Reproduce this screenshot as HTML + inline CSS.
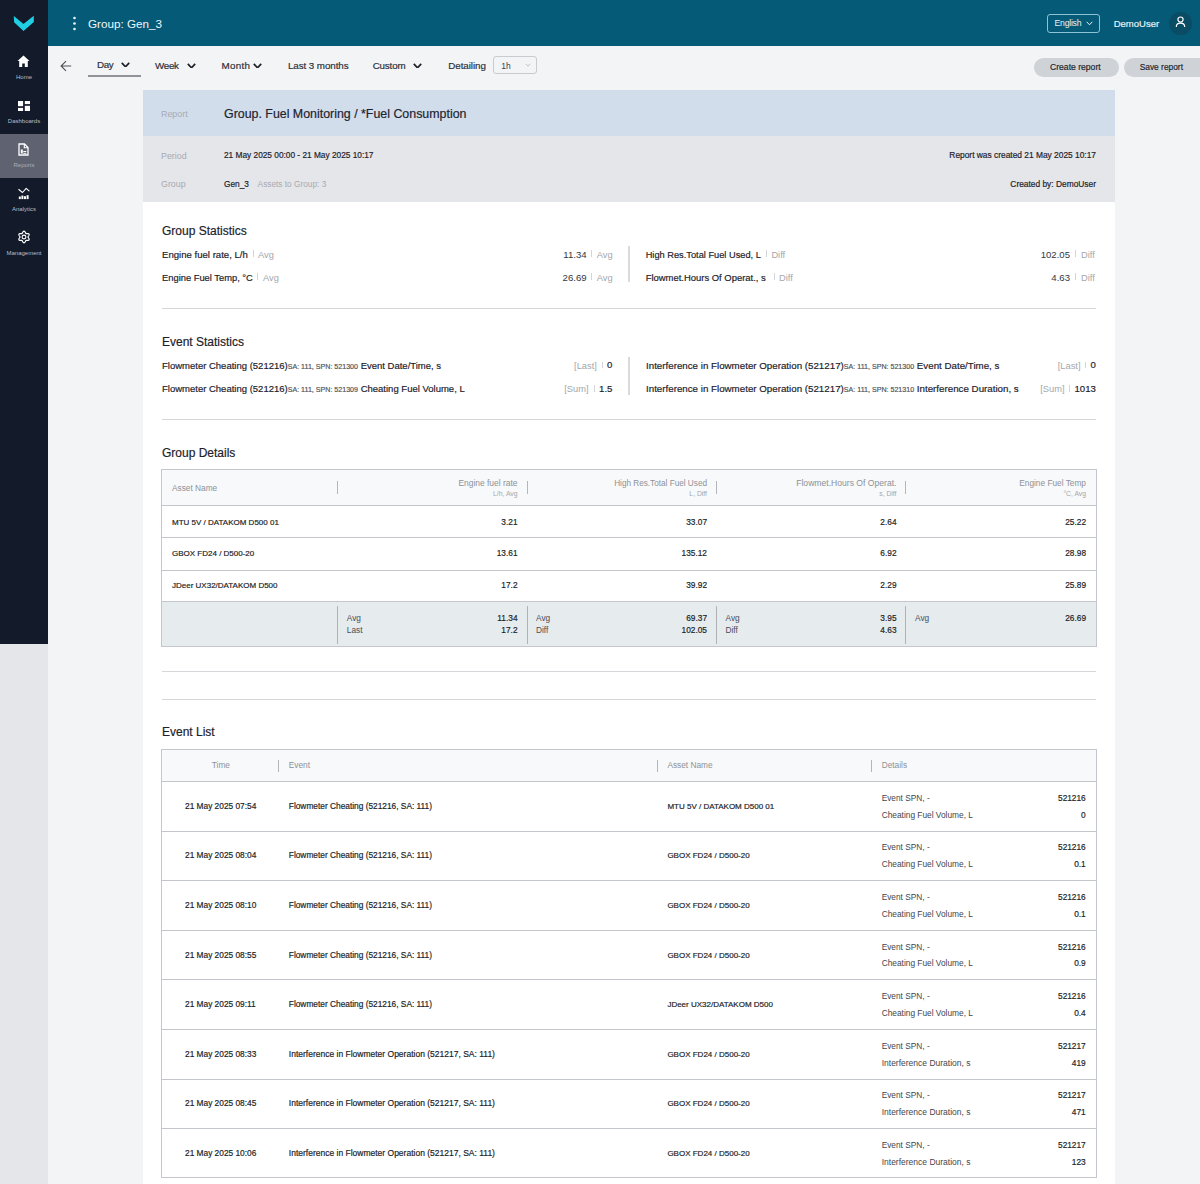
<!DOCTYPE html>
<html><head><meta charset="utf-8"><style>
html,body{margin:0;padding:0;width:1200px;height:1184px;overflow:hidden;background:#f3f4f6;}
body{position:relative;font-family:"Liberation Sans", sans-serif;}
.t{position:absolute;white-space:nowrap;line-height:1;}
.s{-webkit-text-stroke:0.18px currentColor;}
.r{position:absolute;}
</style></head><body>
<div class="r" style="left:0px;top:0px;width:1200px;height:1184px;background:#f3f4f6;"></div>
<div class="r" style="left:0px;top:0px;width:48px;height:644px;background:#131a2a;"></div>
<div class="r" style="left:0px;top:644px;width:48px;height:540px;background:#e4e6ea;"></div>
<div class="r" style="left:0px;top:134px;width:48px;height:44px;background:#5f6371;"></div>
<div class="r" style="left:48px;top:0px;width:1152px;height:46px;background:#055a77;"></div>
<svg class="r" style="left:13px;top:15px" width="22" height="17" viewBox="0 0 22 17"><path d="M0.8 1 L10.5 9 L20.8 0.8 L20.8 7 L10.5 16 L1.1 7.3 Z" fill="#20cfe4"/></svg>
<svg class="r" style="left:17px;top:55px" width="13" height="13" viewBox="0 0 13 13"><path d="M6.5 0.5 L12.5 6 L10.8 6 L10.8 12 L7.8 12 L7.8 8.5 L5.2 8.5 L5.2 12 L2.2 12 L2.2 6 L0.5 6 Z" fill="#fff"/></svg>
<svg class="r" style="left:18px;top:101px" width="12" height="10" viewBox="0 0 12 10"><rect x="0" y="0" width="5.1" height="5.2" fill="#fff"/><rect x="6.8" y="0" width="5.2" height="3.1" fill="#fff"/><rect x="0" y="6.9" width="5.1" height="3.1" fill="#fff"/><rect x="6.8" y="4.8" width="5.2" height="5.2" fill="#fff"/></svg>
<svg class="r" style="left:18px;top:143px" width="11" height="13" viewBox="0 0 11 13"><path d="M1 1 H6.5 L10 4.5 V12 H1 Z" fill="none" stroke="#fff" stroke-width="1.3"/><path d="M6.3 1 V4.7 H10" fill="none" stroke="#fff" stroke-width="1.1"/><rect x="2.8" y="6.5" width="2" height="4" fill="#fff"/><rect x="5.3" y="8" width="3" height="1" fill="#fff"/><rect x="5.3" y="9.8" width="3" height="1" fill="#fff"/></svg>
<svg class="r" style="left:17px;top:186px" width="14" height="14" viewBox="0 0 14 14"><path d="M1.8 3.5 L5.5 6.5 L9.2 2.4 L12 4.8" fill="none" stroke="#fff" stroke-width="1.1" stroke-linejoin="round" stroke-linecap="round"/><rect x="1.8" y="10.5" width="2" height="2.6" fill="#fff"/><rect x="4.4" y="9.6" width="2" height="3.5" fill="#fff"/><rect x="7" y="10.2" width="2" height="2.9" fill="#fff"/><rect x="9.6" y="9.2" width="2" height="3.9" fill="#fff"/></svg>
<svg class="r" style="left:17px;top:230px" width="14" height="14" viewBox="0 0 14 14"><path d="M7.00 1.20 L7.49 1.34 L7.93 1.73 L8.27 2.27 L8.52 2.82 L8.74 3.27 L9.00 3.54 L9.36 3.62 L9.86 3.59 L10.46 3.54 L11.10 3.56 L11.65 3.74 L12.02 4.10 L12.15 4.60 L12.03 5.17 L11.73 5.73 L11.38 6.23 L11.10 6.64 L11.00 7.00 L11.10 7.36 L11.38 7.77 L11.73 8.27 L12.03 8.83 L12.15 9.40 L12.02 9.90 L11.65 10.26 L11.10 10.44 L10.46 10.46 L9.86 10.41 L9.36 10.38 L9.00 10.46 L8.74 10.73 L8.52 11.18 L8.27 11.73 L7.93 12.27 L7.49 12.66 L7.00 12.80 L6.51 12.66 L6.07 12.27 L5.73 11.73 L5.48 11.18 L5.26 10.73 L5.00 10.46 L4.64 10.38 L4.14 10.41 L3.54 10.46 L2.90 10.44 L2.35 10.26 L1.98 9.90 L1.85 9.40 L1.97 8.83 L2.27 8.27 L2.62 7.77 L2.90 7.36 L3.00 7.00 L2.90 6.64 L2.62 6.23 L2.27 5.73 L1.97 5.17 L1.85 4.60 L1.98 4.10 L2.35 3.74 L2.90 3.56 L3.54 3.54 L4.14 3.59 L4.64 3.62 L5.00 3.54 L5.26 3.27 L5.48 2.82 L5.73 2.27 L6.07 1.73 L6.51 1.34 Z" fill="none" stroke="#fff" stroke-width="1.2" stroke-linejoin="round"/><circle cx="7" cy="7" r="1.9" fill="none" stroke="#fff" stroke-width="1.1"/></svg>
<div class="t" style="left:-276.00px;width:600px;text-align:center;top:74.01px;font-size:6.0px;color:#b9bcc4;">Home</div>
<div class="t" style="left:-276.00px;width:600px;text-align:center;top:117.51px;font-size:6.0px;color:#b9bcc4;">Dashboards</div>
<div class="t" style="left:-276.00px;width:600px;text-align:center;top:161.51px;font-size:6.0px;color:#a9acb4;">Reports</div>
<div class="t" style="left:-276.00px;width:600px;text-align:center;top:205.51px;font-size:6.0px;color:#b9bcc4;">Analytics</div>
<div class="t" style="left:-276.00px;width:600px;text-align:center;top:249.51px;font-size:6.0px;color:#b9bcc4;">Management</div>
<svg class="r" style="left:71px;top:15px" width="7" height="17" viewBox="0 0 7 17"><circle cx="3.5" cy="3" r="1.35" fill="#e6f3f7"/><circle cx="3.5" cy="8.5" r="1.35" fill="#e6f3f7"/><circle cx="3.5" cy="14" r="1.35" fill="#e6f3f7"/></svg>
<div class="t" style="left:88.00px;top:17.50px;font-size:11.7px;color:#eef7fa;">Group: Gen_3</div>
<div class="r" style="left:1047px;top:14px;width:51px;height:17px;border:1px solid #8ec3d3;border-radius:3px;box-sizing:content-box;"></div>
<div class="t" style="left:1054.50px;top:19.30px;font-size:8.7px;color:#e6f3f7;letter-spacing:-0.25px;">English</div>
<svg class="r" style="left:1086px;top:21.3px" width="7" height="5" viewBox="0 0 7 5"><path d="M0.7 0.8 L3.5 3.8 L6.3 0.8" fill="none" stroke="#e6f3f7" stroke-width="1"/></svg>
<div class="t s" style="left:1113.70px;top:18.70px;font-size:9.5px;color:#e6f3f7;">DemoUser</div>
<div class="r" style="left:1168.5px;top:11.5px;width:23.5px;height:23.5px;background:#0b4c65;border-radius:50%;"></div>
<svg class="r" style="left:1175px;top:16px" width="11" height="12" viewBox="0 0 11 12"><circle cx="5.5" cy="3.6" r="2.6" fill="none" stroke="#fff" stroke-width="1.2"/><path d="M1.3 11 C1.3 8.2 3.2 7.2 5.5 7.2 C7.8 7.2 9.7 8.2 9.7 11" fill="none" stroke="#fff" stroke-width="1.2"/></svg>
<svg class="r" style="left:59.5px;top:59.5px" width="12" height="12" viewBox="0 0 12 12"><path d="M11.2 6 H1.2 M6 1.1 L1.1 6 L6 10.9" fill="none" stroke="#4f5258" stroke-width="1.15"/></svg>
<div class="t s" style="left:97.00px;top:59.61px;font-size:9.8px;color:#2b2f36;letter-spacing:-0.414px;">Day</div>
<div class="t s" style="left:155.00px;top:60.80px;font-size:9.8px;color:#2b2f36;letter-spacing:-0.291px;">Week</div>
<div class="t s" style="left:221.50px;top:60.80px;font-size:9.8px;color:#2b2f36;letter-spacing:0.316px;">Month</div>
<div class="t s" style="left:287.90px;top:60.80px;font-size:9.8px;color:#2b2f36;letter-spacing:-0.071px;">Last 3 months</div>
<div class="t s" style="left:372.70px;top:60.80px;font-size:9.8px;color:#2b2f36;letter-spacing:-0.173px;">Custom</div>
<div class="t s" style="left:448.30px;top:60.80px;font-size:9.8px;color:#2b2f36;letter-spacing:-0.067px;">Detailing</div>
<svg class="r" style="left:120.5px;top:61.6px" width="9" height="5.6" viewBox="0 0 9 5.6"><path d="M0.8 0.8 L4.5 4.8 L8.2 0.8" fill="none" stroke="#1e2127" stroke-width="1.7"/></svg>
<svg class="r" style="left:186.7px;top:62.8px" width="9" height="5.6" viewBox="0 0 9 5.6"><path d="M0.8 0.8 L4.5 4.8 L8.2 0.8" fill="none" stroke="#1e2127" stroke-width="1.7"/></svg>
<svg class="r" style="left:252.7px;top:62.8px" width="9" height="5.6" viewBox="0 0 9 5.6"><path d="M0.8 0.8 L4.5 4.8 L8.2 0.8" fill="none" stroke="#1e2127" stroke-width="1.7"/></svg>
<svg class="r" style="left:413px;top:62.8px" width="9" height="5.6" viewBox="0 0 9 5.6"><path d="M0.8 0.8 L4.5 4.8 L8.2 0.8" fill="none" stroke="#1e2127" stroke-width="1.7"/></svg>
<div class="r" style="left:88px;top:75px;width:53px;height:2px;background:#909397;"></div>
<div class="r" style="left:493px;top:56px;width:42px;height:16px;border:1px solid #c8cbcf;border-radius:3px;box-sizing:content-box;"></div>
<div class="t" style="left:501.20px;top:61.51px;font-size:8.5px;color:#3a3e45;">1h</div>
<svg class="r" style="left:525px;top:63px" width="6" height="4" viewBox="0 0 6 4"><path d="M0.8 0.8 L3.0 3.2 L5.2 0.8" fill="none" stroke="#b4b7bc" stroke-width="0.8"/></svg>
<div class="r" style="left:1033.5px;top:58px;width:85px;height:18.5px;background:#cfd3d7;border-radius:10px;"></div>
<div class="t s" style="left:1050.00px;top:63.21px;font-size:8.6px;color:#22262d;">Create report</div>
<div class="r" style="left:1123.5px;top:58px;width:90px;height:18.5px;background:#cfd3d7;border-radius:10px;"></div>
<div class="t s" style="left:1139.70px;top:63.21px;font-size:8.4px;color:#22262d;">Save report</div>
<div class="r" style="left:142.5px;top:90px;width:972px;height:1094px;background:#ffffff;"></div>
<div class="r" style="left:142.5px;top:90px;width:972px;height:46px;background:#d2ddec;"></div>
<div class="r" style="left:142.5px;top:136px;width:972px;height:66px;background:#e4e6ea;"></div>
<div class="t" style="left:161.00px;top:109.50px;font-size:8.9px;color:#a7aab0;">Report</div>
<div class="t s" style="left:224.00px;top:108.41px;font-size:12.4px;color:#1d2330;">Group. Fuel Monitoring / *Fuel Consumption</div>
<div class="t" style="left:161.00px;top:151.50px;font-size:8.9px;color:#a7aab0;">Period</div>
<div class="t s" style="left:224.00px;top:151.31px;font-size:8.3px;color:#1d212a;">21 May 2025 00:00 - 21 May 2025 10:17</div>
<div class="t s" style="right:104.00px;top:151.30px;font-size:8.4px;color:#1d212a;">Report was created 21 May 2025 10:17</div>
<div class="t" style="left:161.00px;top:180.00px;font-size:8.9px;color:#a7aab0;">Group</div>
<div class="t s" style="left:224.00px;top:180.01px;font-size:8.3px;color:#1d212a;">Gen_3</div>
<div class="t" style="left:257.60px;top:180.01px;font-size:8.3px;color:#a7aab0;">Assets to Group: 3</div>
<div class="t s" style="right:104.00px;top:180.01px;font-size:8.4px;color:#1d212a;">Created by: DemoUser</div>
<div class="t s" style="left:162.00px;top:224.71px;font-size:12.0px;color:#1d212a;">Group Statistics</div>
<div class="t s" style="left:162.00px;top:250.01px;font-size:9.6px;color:#1d212a;">Engine fuel rate, L/h</div>
<div class="r" style="left:252.8px;top:250px;width:1px;height:6.5px;background:#d3d5d8;"></div>
<div class="t" style="left:258.00px;top:251.00px;font-size:9.3px;color:#a4a7ac;">Avg</div>
<div class="t s" style="left:162.00px;top:274.31px;font-size:9.35px;color:#1d212a;">Engine Fuel Temp, °C</div>
<div class="r" style="left:256.8px;top:273.3px;width:1px;height:6.5px;background:#d3d5d8;"></div>
<div class="t" style="left:263.00px;top:274.31px;font-size:9.3px;color:#a4a7ac;">Avg</div>
<div class="t" style="right:613.40px;top:250.01px;font-size:9.6px;color:#33373e;">11.34</div>
<div class="r" style="left:591.3px;top:250px;width:1px;height:6.5px;background:#d3d5d8;"></div>
<div class="t" style="left:596.80px;top:251.00px;font-size:9.3px;color:#a4a7ac;">Avg</div>
<div class="t" style="right:613.40px;top:273.32px;font-size:9.6px;color:#33373e;">26.69</div>
<div class="r" style="left:591.3px;top:273.3px;width:1px;height:6.5px;background:#d3d5d8;"></div>
<div class="t" style="left:596.80px;top:274.31px;font-size:9.3px;color:#a4a7ac;">Avg</div>
<div class="r" style="left:628px;top:246px;width:1.5px;height:36px;background:#d8dadd;"></div>
<div class="t s" style="left:645.70px;top:251.01px;font-size:9.25px;color:#1d212a;">High Res.Total Fuel Used, L</div>
<div class="r" style="left:765.8px;top:250px;width:1px;height:6.5px;background:#d3d5d8;"></div>
<div class="t" style="left:771.40px;top:251.00px;font-size:9.3px;color:#a4a7ac;">Diff</div>
<div class="t s" style="left:645.70px;top:273.30px;font-size:9.45px;color:#1d212a;">Flowmet.Hours Of Operat., s</div>
<div class="r" style="left:773.8px;top:273.3px;width:1px;height:6.5px;background:#d3d5d8;"></div>
<div class="t" style="left:779.00px;top:274.31px;font-size:9.3px;color:#a4a7ac;">Diff</div>
<div class="t" style="right:130.00px;top:250.01px;font-size:9.6px;color:#33373e;">102.05</div>
<div class="r" style="left:1074.8px;top:250px;width:1px;height:6.5px;background:#d3d5d8;"></div>
<div class="t" style="left:1081.00px;top:251.00px;font-size:9.3px;color:#a4a7ac;">Diff</div>
<div class="t" style="right:130.00px;top:273.32px;font-size:9.6px;color:#33373e;">4.63</div>
<div class="r" style="left:1074.8px;top:273.3px;width:1px;height:6.5px;background:#d3d5d8;"></div>
<div class="t" style="left:1081.00px;top:274.31px;font-size:9.3px;color:#a4a7ac;">Diff</div>
<div class="r" style="left:162px;top:308px;width:934px;height:1px;background:#d5d7db;"></div>
<div class="t s" style="left:162.00px;top:335.51px;font-size:12.0px;color:#1d212a;">Event Statistics</div>
<div class="t s" style="left:162px;top:360.70px;font-size:9.5px;color:#1d212a;">Flowmeter Cheating (521216)<span style="font-size:7.100px;color:#50545b;">SA: 111, SPN: 521300</span> Event Date/Time, s</div>
<div class="t s" style="left:162px;top:383.90px;font-size:9.5px;color:#1d212a;">Flowmeter Cheating (521216)<span style="font-size:7.100px;color:#50545b;">SA: 111, SPN: 521309</span> Cheating Fuel Volume, L</div>
<div class="t" style="right:603.20px;top:362.00px;font-size:9.3px;color:#a4a7ac;">[Last]</div>
<div class="r" style="left:601.5px;top:361.8px;width:1px;height:6.5px;background:#d3d5d8;"></div>
<div class="t s" style="right:587.60px;top:360.32px;font-size:9.6px;color:#1d212a;">0</div>
<div class="t" style="right:611.50px;top:385.41px;font-size:9.3px;color:#a4a7ac;">[Sum]</div>
<div class="r" style="left:593.7px;top:385.2px;width:1px;height:6.5px;background:#d3d5d8;"></div>
<div class="t s" style="right:587.60px;top:383.71px;font-size:9.6px;color:#1d212a;">1.5</div>
<div class="r" style="left:628px;top:357px;width:1.5px;height:37.5px;background:#d8dadd;"></div>
<div class="t s" style="left:646px;top:360.71px;font-size:9.75px;color:#1d212a;">Interference in Flowmeter Operation (521217)<span style="font-size:7.100px;color:#50545b;">SA: 111, SPN: 521300</span> Event Date/Time, s</div>
<div class="t s" style="left:646px;top:383.91px;font-size:9.75px;color:#1d212a;">Interference in Flowmeter Operation (521217)<span style="font-size:7.100px;color:#50545b;">SA: 111, SPN: 521310</span> Interference Duration, s</div>
<div class="t" style="right:119.50px;top:362.00px;font-size:9.3px;color:#a4a7ac;">[Last]</div>
<div class="r" style="left:1085.3px;top:361.8px;width:1px;height:6.5px;background:#d3d5d8;"></div>
<div class="t s" style="right:104.20px;top:360.32px;font-size:9.6px;color:#1d212a;">0</div>
<div class="t" style="right:135.50px;top:385.41px;font-size:9.3px;color:#a4a7ac;">[Sum]</div>
<div class="r" style="left:1068.8px;top:385.2px;width:1px;height:6.5px;background:#d3d5d8;"></div>
<div class="t s" style="right:104.20px;top:383.71px;font-size:9.6px;color:#1d212a;">1013</div>
<div class="r" style="left:162px;top:419px;width:934px;height:1px;background:#d5d7db;"></div>
<div class="t s" style="left:162.00px;top:446.71px;font-size:12.0px;color:#1d212a;">Group Details</div>
<div class="r" style="left:161px;top:469px;width:934px;height:176px;border:1px solid #c3c7cc;background:#fff;"></div>
<div class="r" style="left:162px;top:470px;width:934px;height:35px;background:#f8f9fa;"></div>
<div class="r" style="left:162px;top:505px;width:934px;height:1px;background:#c3c7cc;"></div>
<div class="r" style="left:162px;top:537px;width:934px;height:1px;background:#c3c7cc;"></div>
<div class="r" style="left:162px;top:570px;width:934px;height:1px;background:#c3c7cc;"></div>
<div class="r" style="left:162px;top:601px;width:934px;height:1px;background:#c3c7cc;"></div>
<div class="r" style="left:162px;top:602px;width:934px;height:44px;background:#e6ebee;"></div>
<div class="t" style="left:172.00px;top:484.01px;font-size:8.3px;color:#8d9197;">Asset Name</div>
<div class="r" style="left:336.5px;top:481px;width:1px;height:12.5px;background:#b3b7bc;"></div>
<div class="r" style="left:526.5px;top:481px;width:1px;height:12.5px;background:#b3b7bc;"></div>
<div class="r" style="left:715.5px;top:481px;width:1px;height:12.5px;background:#b3b7bc;"></div>
<div class="r" style="left:904.5px;top:481px;width:1px;height:12.5px;background:#b3b7bc;"></div>
<div class="t" style="right:682.50px;top:478.50px;font-size:8.45px;color:#8d9197;">Engine fuel rate</div>
<div class="t" style="right:682.50px;top:491.01px;font-size:6.8px;color:#a3a7ac;">L/h, Avg</div>
<div class="t" style="right:493.00px;top:479.51px;font-size:8.2px;color:#8d9197;">High Res.Total Fuel Used</div>
<div class="t" style="right:493.00px;top:491.01px;font-size:6.8px;color:#a3a7ac;">L, Diff</div>
<div class="t" style="right:303.50px;top:478.50px;font-size:8.6px;color:#8d9197;">Flowmet.Hours Of Operat.</div>
<div class="t" style="right:303.50px;top:491.01px;font-size:6.8px;color:#a3a7ac;">s, Diff</div>
<div class="t" style="right:114.00px;top:478.51px;font-size:8.3px;color:#8d9197;">Engine Fuel Temp</div>
<div class="t" style="right:114.00px;top:491.01px;font-size:6.8px;color:#a3a7ac;">°C, Avg</div>
<div class="t s" style="left:172.00px;top:518.81px;font-size:8.0px;color:#1a1e26;">MTU 5V / DATAKOM D500 01</div>
<div class="t s" style="right:682.50px;top:517.81px;font-size:8.3px;color:#1a1e26;">3.21</div>
<div class="t s" style="right:493.00px;top:517.81px;font-size:8.3px;color:#1a1e26;">33.07</div>
<div class="t s" style="right:303.50px;top:517.81px;font-size:8.3px;color:#1a1e26;">2.64</div>
<div class="t s" style="right:114.00px;top:517.81px;font-size:8.3px;color:#1a1e26;">25.22</div>
<div class="t s" style="left:172.00px;top:550.21px;font-size:8.0px;color:#1a1e26;">GBOX FD24 / D500-20</div>
<div class="t s" style="right:682.50px;top:549.22px;font-size:8.3px;color:#1a1e26;">13.61</div>
<div class="t s" style="right:493.00px;top:549.22px;font-size:8.3px;color:#1a1e26;">135.12</div>
<div class="t s" style="right:303.50px;top:549.22px;font-size:8.3px;color:#1a1e26;">6.92</div>
<div class="t s" style="right:114.00px;top:549.22px;font-size:8.3px;color:#1a1e26;">28.98</div>
<div class="t s" style="left:172.00px;top:582.31px;font-size:8.0px;color:#1a1e26;">JDeer UX32/DATAKOM D500</div>
<div class="t s" style="right:682.50px;top:581.31px;font-size:8.3px;color:#1a1e26;">17.2</div>
<div class="t s" style="right:493.00px;top:581.31px;font-size:8.3px;color:#1a1e26;">39.92</div>
<div class="t s" style="right:303.50px;top:581.31px;font-size:8.3px;color:#1a1e26;">2.29</div>
<div class="t s" style="right:114.00px;top:581.31px;font-size:8.3px;color:#1a1e26;">25.89</div>
<div class="r" style="left:336.5px;top:606px;width:1px;height:37.5px;background:#aeb2b7;"></div>
<div class="r" style="left:526.5px;top:606px;width:1px;height:37.5px;background:#aeb2b7;"></div>
<div class="r" style="left:715.5px;top:606px;width:1px;height:37.5px;background:#aeb2b7;"></div>
<div class="r" style="left:904.5px;top:606px;width:1px;height:37.5px;background:#aeb2b7;"></div>
<div class="t" style="left:346.80px;top:614.31px;font-size:8.3px;color:#4a4e56;">Avg</div>
<div class="t" style="left:346.80px;top:626.22px;font-size:8.3px;color:#4a4e56;">Last</div>
<div class="t s" style="right:682.50px;top:614.31px;font-size:8.3px;color:#1a1e26;">11.34</div>
<div class="t s" style="right:682.50px;top:626.22px;font-size:8.3px;color:#1a1e26;">17.2</div>
<div class="t" style="left:536.00px;top:614.31px;font-size:8.3px;color:#4a4e56;">Avg</div>
<div class="t" style="left:536.00px;top:626.22px;font-size:8.3px;color:#4a4e56;">Diff</div>
<div class="t s" style="right:493.00px;top:614.31px;font-size:8.3px;color:#1a1e26;">69.37</div>
<div class="t s" style="right:493.00px;top:626.22px;font-size:8.3px;color:#1a1e26;">102.05</div>
<div class="t" style="left:725.50px;top:614.31px;font-size:8.3px;color:#4a4e56;">Avg</div>
<div class="t" style="left:725.50px;top:626.22px;font-size:8.3px;color:#4a4e56;">Diff</div>
<div class="t s" style="right:303.50px;top:614.31px;font-size:8.3px;color:#1a1e26;">3.95</div>
<div class="t s" style="right:303.50px;top:626.22px;font-size:8.3px;color:#1a1e26;">4.63</div>
<div class="t" style="left:915.00px;top:614.31px;font-size:8.3px;color:#4a4e56;">Avg</div>
<div class="t s" style="right:114.00px;top:614.31px;font-size:8.3px;color:#1a1e26;">26.69</div>
<div class="r" style="left:162px;top:671px;width:934px;height:1px;background:#d5d7db;"></div>
<div class="r" style="left:162px;top:699px;width:934px;height:1px;background:#d5d7db;"></div>
<div class="t s" style="left:162.00px;top:726.32px;font-size:12.0px;color:#1d212a;">Event List</div>
<div class="r" style="left:161px;top:749px;width:934px;height:427px;border:1px solid #c3c7cc;background:#fff;"></div>
<div class="r" style="left:162px;top:750px;width:934px;height:31px;background:#f8f9fa;"></div>
<div class="r" style="left:162px;top:781px;width:934px;height:1px;background:#c3c7cc;"></div>
<div class="t" style="left:211.80px;top:761.31px;font-size:8.3px;color:#8d9197;">Time</div>
<div class="t" style="left:288.80px;top:761.31px;font-size:8.3px;color:#8d9197;">Event</div>
<div class="t" style="left:667.40px;top:761.31px;font-size:8.3px;color:#8d9197;">Asset Name</div>
<div class="t" style="left:881.70px;top:761.31px;font-size:8.3px;color:#8d9197;">Details</div>
<div class="r" style="left:277.8px;top:759.5px;width:1px;height:12px;background:#b3b7bc;"></div>
<div class="r" style="left:657.1px;top:759.5px;width:1px;height:12px;background:#b3b7bc;"></div>
<div class="r" style="left:871.4px;top:759.5px;width:1px;height:12px;background:#b3b7bc;"></div>
<div class="t s" style="left:185.00px;top:801.80px;font-size:8.33px;color:#1a1e26;">21 May 2025 07:54</div>
<div class="t s" style="left:288.80px;top:801.80px;font-size:8.33px;color:#1a1e26;">Flowmeter Cheating (521216, SA: 111)</div>
<div class="t s" style="left:667.40px;top:802.81px;font-size:8.0px;color:#1a1e26;">MTU 5V / DATAKOM D500 01</div>
<div class="t" style="left:881.70px;top:793.72px;font-size:8.3px;color:#42464d;">Event SPN, -</div>
<div class="t" style="left:881.70px;top:810.61px;font-size:8.34px;color:#42464d;">Cheating Fuel Volume, L</div>
<div class="t s" style="right:114.30px;top:793.72px;font-size:8.3px;color:#1a1e26;">521216</div>
<div class="t s" style="right:114.30px;top:810.61px;font-size:8.3px;color:#1a1e26;">0</div>
<div class="r" style="left:162px;top:831px;width:934px;height:1px;background:#c3c7cc;"></div>
<div class="t s" style="left:185.00px;top:851.40px;font-size:8.33px;color:#1a1e26;">21 May 2025 08:04</div>
<div class="t s" style="left:288.80px;top:851.40px;font-size:8.33px;color:#1a1e26;">Flowmeter Cheating (521216, SA: 111)</div>
<div class="t s" style="left:667.40px;top:852.40px;font-size:8.0px;color:#1a1e26;">GBOX FD24 / D500-20</div>
<div class="t" style="left:881.70px;top:843.31px;font-size:8.3px;color:#42464d;">Event SPN, -</div>
<div class="t" style="left:881.70px;top:860.22px;font-size:8.34px;color:#42464d;">Cheating Fuel Volume, L</div>
<div class="t s" style="right:114.30px;top:843.31px;font-size:8.3px;color:#1a1e26;">521216</div>
<div class="t s" style="right:114.30px;top:860.22px;font-size:8.3px;color:#1a1e26;">0.1</div>
<div class="r" style="left:162px;top:880px;width:934px;height:1px;background:#c3c7cc;"></div>
<div class="t s" style="left:185.00px;top:901.01px;font-size:8.33px;color:#1a1e26;">21 May 2025 08:10</div>
<div class="t s" style="left:288.80px;top:901.01px;font-size:8.33px;color:#1a1e26;">Flowmeter Cheating (521216, SA: 111)</div>
<div class="t s" style="left:667.40px;top:902.01px;font-size:8.0px;color:#1a1e26;">GBOX FD24 / D500-20</div>
<div class="t" style="left:881.70px;top:892.92px;font-size:8.3px;color:#42464d;">Event SPN, -</div>
<div class="t" style="left:881.70px;top:909.81px;font-size:8.34px;color:#42464d;">Cheating Fuel Volume, L</div>
<div class="t s" style="right:114.30px;top:892.92px;font-size:8.3px;color:#1a1e26;">521216</div>
<div class="t s" style="right:114.30px;top:909.81px;font-size:8.3px;color:#1a1e26;">0.1</div>
<div class="r" style="left:162px;top:930px;width:934px;height:1px;background:#c3c7cc;"></div>
<div class="t s" style="left:185.00px;top:950.60px;font-size:8.33px;color:#1a1e26;">21 May 2025 08:55</div>
<div class="t s" style="left:288.80px;top:950.60px;font-size:8.33px;color:#1a1e26;">Flowmeter Cheating (521216, SA: 111)</div>
<div class="t s" style="left:667.40px;top:951.60px;font-size:8.0px;color:#1a1e26;">GBOX FD24 / D500-20</div>
<div class="t" style="left:881.70px;top:942.51px;font-size:8.3px;color:#42464d;">Event SPN, -</div>
<div class="t" style="left:881.70px;top:959.41px;font-size:8.34px;color:#42464d;">Cheating Fuel Volume, L</div>
<div class="t s" style="right:114.30px;top:942.51px;font-size:8.3px;color:#1a1e26;">521216</div>
<div class="t s" style="right:114.30px;top:959.42px;font-size:8.3px;color:#1a1e26;">0.9</div>
<div class="r" style="left:162px;top:979px;width:934px;height:1px;background:#c3c7cc;"></div>
<div class="t s" style="left:185.00px;top:1000.21px;font-size:8.33px;color:#1a1e26;">21 May 2025 09:11</div>
<div class="t s" style="left:288.80px;top:1000.21px;font-size:8.33px;color:#1a1e26;">Flowmeter Cheating (521216, SA: 111)</div>
<div class="t s" style="left:667.40px;top:1001.21px;font-size:8.0px;color:#1a1e26;">JDeer UX32/DATAKOM D500</div>
<div class="t" style="left:881.70px;top:992.11px;font-size:8.3px;color:#42464d;">Event SPN, -</div>
<div class="t" style="left:881.70px;top:1009.00px;font-size:8.34px;color:#42464d;">Cheating Fuel Volume, L</div>
<div class="t s" style="right:114.30px;top:992.11px;font-size:8.3px;color:#1a1e26;">521216</div>
<div class="t s" style="right:114.30px;top:1009.01px;font-size:8.3px;color:#1a1e26;">0.4</div>
<div class="r" style="left:162px;top:1029px;width:934px;height:1px;background:#c3c7cc;"></div>
<div class="t s" style="left:185.00px;top:1049.80px;font-size:8.33px;color:#1a1e26;">21 May 2025 08:33</div>
<div class="t s" style="left:288.80px;top:1049.81px;font-size:8.5px;color:#1a1e26;">Interference in Flowmeter Operation (521217, SA: 111)</div>
<div class="t s" style="left:667.40px;top:1050.81px;font-size:8.0px;color:#1a1e26;">GBOX FD24 / D500-20</div>
<div class="t" style="left:881.70px;top:1041.72px;font-size:8.3px;color:#42464d;">Event SPN, -</div>
<div class="t" style="left:881.70px;top:1058.61px;font-size:8.5px;color:#42464d;">Interference Duration, s</div>
<div class="t s" style="right:114.30px;top:1041.72px;font-size:8.3px;color:#1a1e26;">521217</div>
<div class="t s" style="right:114.30px;top:1058.61px;font-size:8.3px;color:#1a1e26;">419</div>
<div class="r" style="left:162px;top:1079px;width:934px;height:1px;background:#c3c7cc;"></div>
<div class="t s" style="left:185.00px;top:1099.40px;font-size:8.33px;color:#1a1e26;">21 May 2025 08:45</div>
<div class="t s" style="left:288.80px;top:1099.42px;font-size:8.5px;color:#1a1e26;">Interference in Flowmeter Operation (521217, SA: 111)</div>
<div class="t s" style="left:667.40px;top:1100.40px;font-size:8.0px;color:#1a1e26;">GBOX FD24 / D500-20</div>
<div class="t" style="left:881.70px;top:1091.31px;font-size:8.3px;color:#42464d;">Event SPN, -</div>
<div class="t" style="left:881.70px;top:1108.20px;font-size:8.5px;color:#42464d;">Interference Duration, s</div>
<div class="t s" style="right:114.30px;top:1091.31px;font-size:8.3px;color:#1a1e26;">521217</div>
<div class="t s" style="right:114.30px;top:1108.22px;font-size:8.3px;color:#1a1e26;">471</div>
<div class="r" style="left:162px;top:1128px;width:934px;height:1px;background:#c3c7cc;"></div>
<div class="t s" style="left:185.00px;top:1149.01px;font-size:8.33px;color:#1a1e26;">21 May 2025 10:06</div>
<div class="t s" style="left:288.80px;top:1149.01px;font-size:8.5px;color:#1a1e26;">Interference in Flowmeter Operation (521217, SA: 111)</div>
<div class="t s" style="left:667.40px;top:1150.01px;font-size:8.0px;color:#1a1e26;">GBOX FD24 / D500-20</div>
<div class="t" style="left:881.70px;top:1140.92px;font-size:8.3px;color:#42464d;">Event SPN, -</div>
<div class="t" style="left:881.70px;top:1157.81px;font-size:8.5px;color:#42464d;">Interference Duration, s</div>
<div class="t s" style="right:114.30px;top:1140.92px;font-size:8.3px;color:#1a1e26;">521217</div>
<div class="t s" style="right:114.30px;top:1157.81px;font-size:8.3px;color:#1a1e26;">123</div>
</body></html>
